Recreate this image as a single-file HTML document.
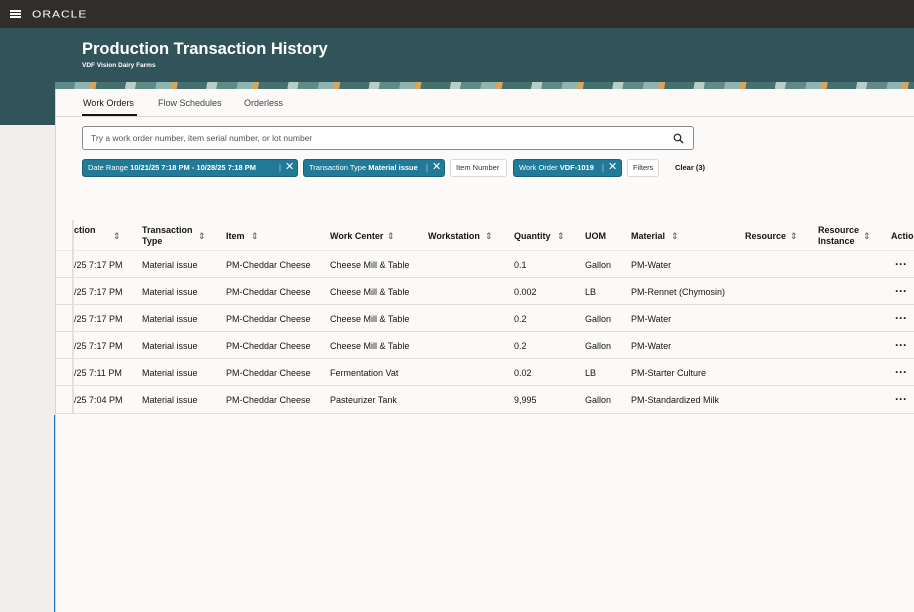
<!DOCTYPE html>
<html><head><style>
*{box-sizing:border-box;margin:0;padding:0}
body{width:914px;height:612px;overflow:hidden;background:#f1efed;font-family:"Liberation Sans",sans-serif;position:relative;color:#161513}
.top{position:absolute;left:0;top:0;width:914px;height:28px;background:#312d2a}
.band{position:absolute;left:0;top:28px;width:914px;height:97px;background:#31545a}
.pat{position:absolute;left:55px;top:82px;width:859px;height:8px;background:repeating-linear-gradient(100deg,#5f8a86 0 20px,#8fb3ad 20px 35px,#d6a562 35px 41px,#46706d 41px 70px,#b9ccc7 70px 80px)}
.card{position:absolute;left:55px;top:89px;width:859px;height:523px;background:#fbfaf9;border-left:1px solid #d8d4d0}
.t{position:absolute;font-size:9px;white-space:nowrap}
.h{font-weight:bold;font-size:9px}
.chip{position:absolute;top:159px;height:18px;border-radius:3px;font-size:7.5px;line-height:16px;padding-left:5px;white-space:nowrap}
.cb{background:#227a99;color:#fff;border:1px solid #1b5f78}
.cw{background:#fff;border:1px solid #dcd8d4;color:#333}
.row{position:absolute;left:55px;width:859px;border-bottom:1px solid #e2dfdc;height:27px}
.s{position:absolute;font-size:9px;color:#555}
.d{left:895px;font-weight:bold;font-size:12px;top:-3px}
</style></head><body>
<div class="top"></div>
<div style="position:absolute;left:10px;top:10px;width:11px;height:2px;background:#fff;box-shadow:0 3px 0 #fff,0 6px 0 #fff"></div>
<div class="t" style="left:32px;top:7px;color:#fff;font-size:12px;letter-spacing:1px;transform:scaleY(0.85)">ORACLE</div>
<div class="band"></div>
<div class="t" style="left:82px;top:40px;color:#fff;font-size:16.5px;font-weight:bold">Production Transaction History</div>
<div class="t" style="left:82px;top:62px;color:#fff;font-size:6.5px;font-weight:bold">VDF Vision Dairy Farms</div>
<div class="pat"></div>
<div class="card"></div>
<div style="position:absolute;left:54px;top:415px;width:1px;height:197px;background:#2a6fd6"></div>
<div class="t" style="left:83px;top:98px;font-size:9px">Work Orders</div>
<div style="position:absolute;left:82px;top:114px;width:55px;height:2px;background:#161513"></div>
<div class="t" style="left:158px;top:98px;font-size:9px;color:#444">Flow Schedules</div>
<div class="t" style="left:244px;top:98px;font-size:9px;color:#444">Orderless</div>
<div style="position:absolute;left:55px;top:116px;width:859px;height:1px;background:#dcd8d4"></div>
<div style="position:absolute;left:82px;top:126px;width:612px;height:24px;border:1px solid #8f8a86;border-radius:3px;background:#fff"></div>
<div class="t" style="left:91px;top:133px;font-size:8.5px;color:#555">Try a work order number, item serial number, or lot number</div>
<svg style="position:absolute;left:673px;top:133px" width="11" height="11" viewBox="0 0 11 11"><circle cx="4.5" cy="4.5" r="3.3" fill="none" stroke="#222" stroke-width="1.2"/><path d="M7 7l3 3" stroke="#222" stroke-width="1.3"/></svg>
<div class="chip cb" style="left:82px;width:216px">Date Range <b>10/21/25 7:18 PM - 10/28/25 7:18 PM</b> <span style="position:absolute;left:196px;top:0;opacity:.7">|</span><span style="position:absolute;left:202px;top:-1px;font-size:11px">✕</span></div>
<div class="chip cb" style="left:303px;width:142px">Transaction Type <b>Material issue</b><span style="position:absolute;left:122px;top:0;opacity:.7">|</span><span style="position:absolute;left:128px;top:-1px;font-size:11px">✕</span></div>
<div class="chip cw" style="left:450px;width:57px">Item Number</div>
<div class="chip cb" style="left:513px;width:109px">Work Order <b>VDF-1019</b><span style="position:absolute;left:88px;top:0;opacity:.7">|</span><span style="position:absolute;left:94px;top:-1px;font-size:11px">✕</span></div>
<div class="chip cw" style="left:627px;width:32px">Filters</div>
<div class="t" style="left:675px;top:163px;font-size:7.5px;font-weight:bold">Clear (3)</div>
<div class="row" style="top:222px;height:29px;border-color:#ebe8e5"></div>
<div class="t h" style="left:74px;top:225px">ction</div><div class="s" style="left:113px;top:231px">⇕</div>
<div class="t h" style="left:142px;top:225px;line-height:11px">Transaction<br>Type</div><div class="s" style="left:198px;top:231px">⇕</div>
<div class="t h" style="left:226px;top:231px">Item</div><div class="s" style="left:251px;top:231px">⇕</div>
<div class="t h" style="left:330px;top:231px">Work Center</div><div class="s" style="left:387px;top:231px">⇕</div>
<div class="t h" style="left:428px;top:231px">Workstation</div><div class="s" style="left:485px;top:231px">⇕</div>
<div class="t h" style="left:514px;top:231px">Quantity</div><div class="s" style="left:557px;top:231px">⇕</div>
<div class="t h" style="left:585px;top:231px">UOM</div>
<div class="t h" style="left:631px;top:231px">Material</div><div class="s" style="left:671px;top:231px">⇕</div>
<div class="t h" style="left:745px;top:231px">Resource</div><div class="s" style="left:790px;top:231px">⇕</div>
<div class="t h" style="left:818px;top:225px;line-height:11px">Resource<br>Instance</div><div class="s" style="left:863px;top:231px">⇕</div>
<div class="t h" style="left:891px;top:231px">Actio</div>
<div style="position:absolute;left:72px;top:220px;width:2px;height:194px;background:#e2dfdc"></div>

<div class="row" style="top:251px"></div><div class="row" style="top:278px"></div><div class="row" style="top:305px"></div><div class="row" style="top:332px"></div><div class="row" style="top:359px"></div><div class="row" style="top:387px"></div>

<div style="position:absolute;left:0;top:260px;width:914px">
<div style="position:relative;height:27px"><span class="t" style="left:74px">/25 7:17 PM</span><span class="t" style="left:142px">Material issue</span><span class="t" style="left:226px">PM-Cheddar Cheese</span><span class="t" style="left:330px">Cheese Mill &amp; Table</span><span class="t" style="left:514px">0.1</span><span class="t" style="left:585px">Gallon</span><span class="t" style="left:631px">PM-Water</span><span class="t d">···</span></div>
<div style="position:relative;height:27px"><span class="t" style="left:74px">/25 7:17 PM</span><span class="t" style="left:142px">Material issue</span><span class="t" style="left:226px">PM-Cheddar Cheese</span><span class="t" style="left:330px">Cheese Mill &amp; Table</span><span class="t" style="left:514px">0.002</span><span class="t" style="left:585px">LB</span><span class="t" style="left:631px">PM-Rennet (Chymosin)</span><span class="t d">···</span></div>
<div style="position:relative;height:27px"><span class="t" style="left:74px">/25 7:17 PM</span><span class="t" style="left:142px">Material issue</span><span class="t" style="left:226px">PM-Cheddar Cheese</span><span class="t" style="left:330px">Cheese Mill &amp; Table</span><span class="t" style="left:514px">0.2</span><span class="t" style="left:585px">Gallon</span><span class="t" style="left:631px">PM-Water</span><span class="t d">···</span></div>
<div style="position:relative;height:27px"><span class="t" style="left:74px">/25 7:17 PM</span><span class="t" style="left:142px">Material issue</span><span class="t" style="left:226px">PM-Cheddar Cheese</span><span class="t" style="left:330px">Cheese Mill &amp; Table</span><span class="t" style="left:514px">0.2</span><span class="t" style="left:585px">Gallon</span><span class="t" style="left:631px">PM-Water</span><span class="t d">···</span></div>
<div style="position:relative;height:27px"><span class="t" style="left:74px">/25 7:11 PM</span><span class="t" style="left:142px">Material issue</span><span class="t" style="left:226px">PM-Cheddar Cheese</span><span class="t" style="left:330px">Fermentation Vat</span><span class="t" style="left:514px">0.02</span><span class="t" style="left:585px">LB</span><span class="t" style="left:631px">PM-Starter Culture</span><span class="t d">···</span></div>
<div style="position:relative;height:27px"><span class="t" style="left:74px">/25 7:04 PM</span><span class="t" style="left:142px">Material issue</span><span class="t" style="left:226px">PM-Cheddar Cheese</span><span class="t" style="left:330px">Pasteurizer Tank</span><span class="t" style="left:514px">9,995</span><span class="t" style="left:585px">Gallon</span><span class="t" style="left:631px">PM-Standardized Milk</span><span class="t d">···</span></div>
</div>
</body></html>
